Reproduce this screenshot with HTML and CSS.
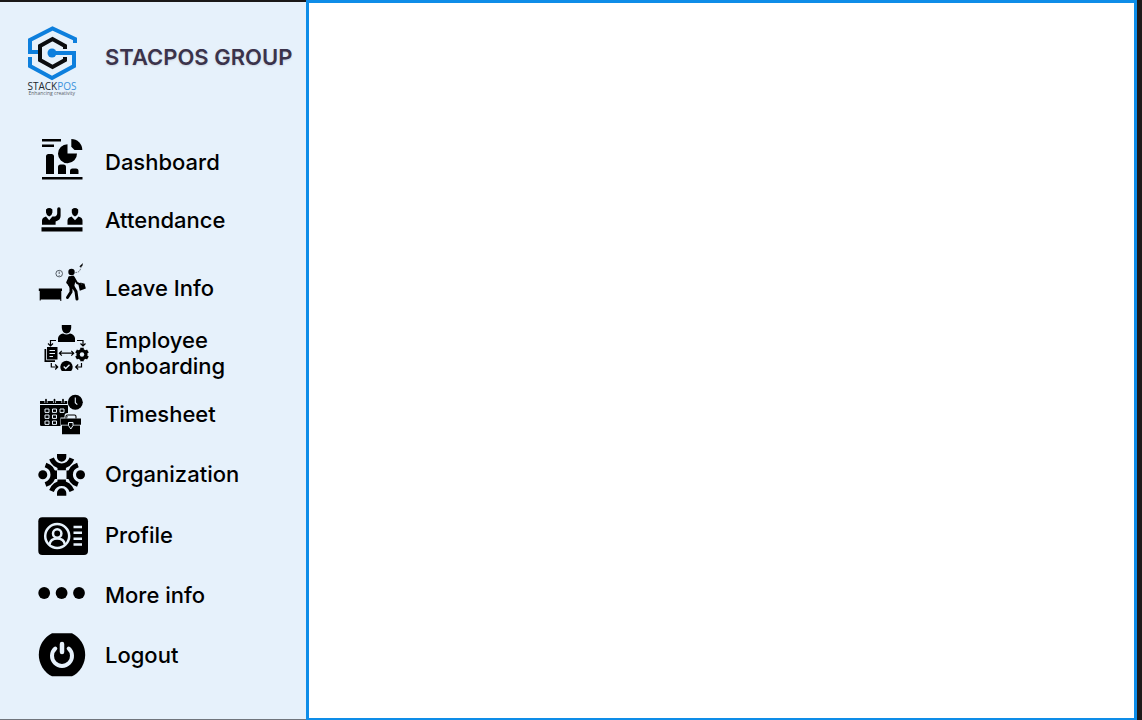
FILE: index.html
```html
<!DOCTYPE html>
<html lang="en">
<head>
<meta charset="utf-8">
<meta name="viewport" content="width=device-width, initial-scale=1">
<title>Stacpos Group</title>
<link rel="stylesheet" href="styles.css">
</head>
<body>
<div class="app">
  <aside class="sidebar">
    <header class="brand">
      <svg class="brand-logo" viewBox="24 24 56 74" role="img" aria-label="StackPOS">
        <g fill="none" stroke-width="4">
          <path stroke="#0d7fdd" d="M75 43V39L52.500 28.500L30 40V52H38M51 53H74V66L52 78L30 66V57"/>
          <path stroke="#0b0d10" d="M65 49V46L52.500 39L40 46V60L52.500 67L65 60V57"/>
        </g>
        <circle cx="52" cy="53" r="4.500" fill="#0d7fdd"/>
        <text class="logo-name" x="27.500" y="90"><tspan>STACK</tspan><tspan class="logo-accent">POS</tspan></text>
        <text class="logo-tagline" x="28.500" y="95">Enhancing creativity</text>
      </svg>
      <h1 class="brand-title">STACPOS GROUP</h1>
    </header>
    <nav class="menu" aria-label="Main">
      <a class="item" href="#dashboard">
        <svg class="icon" viewBox="36 134 56 56" aria-hidden="true">
          <path d="M42 139h19v2.600H42zM42 144.500h12v2.500H42zM42 177h40.500v2.500H42z"/>
          <path d="M46 174v-17.500q0-2.500 2.500-2.500h3q2.500 0 2.500 2.500V174zM58 174v-7q0-2.500 2.500-2.500h3q2.500 0 2.500 2.500v7zM70 174v-3q0-2.500 2.500-2.500h3.500q2.500 0 2.500 2.500v3z"/>
          <path d="M67.500 144.200V153.500H77A9.500 9.500 0 1 1 67.500 144.200z"/>
          <path d="M71.300 139A11 11 0 0 1 82.300 150H74.500L71.300 146.800z"/>
        </svg>
        <span>Dashboard</span>
      </a>
      <a class="item gap-small" href="#attendance">
        <svg class="icon" viewBox="36 192 56 56" aria-hidden="true">
          <path d="M41.500 227.200h41v4.300h-41z"/>
          <path d="M46 209.500q3.200-2.800 6.400 0v3q-.4 3-3.200 4-2.800-1-3.200-4zM71.800 209.500q3.200-2.800 6.400 0v3q-.4 3-3.200 4-2.800-1-3.200-4z"/>
          <path d="M42 224.800V220.500q0-2.800 4-4l3.200 3.800 3.200-3.800q4.500.7 4.800-3V209q0-1.800 1.700-1.800T60.600 209v7q0 4-5 5.500v3.300z"/>
          <path d="M67.500 224.800V220.500q0-2.800 4-4l3.500 3.800 3.500-3.800q4 1.200 4 4v4.300z"/>
        </svg>
        <span>Attendance</span>
      </a>
      <a class="item gap-large" href="#leave">
        <svg class="icon" viewBox="36 260 56 56" aria-hidden="true">
          <path d="M38.800 288.500H62V291H38.800zM40.200 290H60.800V299.500H40.200zM39.700 290h1v10.500h-1zM60.300 290h1v11h-1z"/>
          <g fill="none" stroke="#333b42" stroke-width="0.800">
            <circle cx="59.200" cy="273.600" r="3.300"/>
            <path d="M59.200 271.500v2.500M59.200 275v.8"/>
            <path stroke-dasharray="1.500 1" d="M75.500 272.500q5 0 5.500-6"/>
          </g>
          <path d="M79.300 266.500l3.700-3.500-.7 3-1.500 1z"/>
          <circle cx="71.500" cy="272" r="3.200"/>
          <path d="M68.500 276.500L73.500 275.500L75.500 281L73.800 288L70.500 289L68 285z"/>
          <g fill="none" stroke="#000" stroke-linecap="round" stroke-linejoin="round">
            <path stroke-width="2" d="M69.500 277.500L67.200 282.500 70 285.500M73.500 277L77 283 80.500 284.500"/>
            <path stroke-width="3" d="M71 287L71 292 67.500 297.500M73 286.500L76 291.500 77 299"/>
            <path stroke-width="1" d="M79.500 285.500l1-2.500 3 1"/>
          </g>
          <path d="M78.500 285l6-1.500 1.300 5-6 2.300z"/>
        </svg>
        <span>Leave Info</span>
      </a>
      <a class="item gap-medium" href="#onboarding">
        <svg class="icon" viewBox="36 325 56 56" aria-hidden="true">
          <path d="M61.800 325h9.400v3q-.5 5-4.700 5.500-4.200-.5-4.700-5.500zM58 342V338q1-4 5-4.500 3.500 1.800 7 0 4 .5 5 4.500v4z"/>
          <path d="M47 347H57.500V359.500H47zM44.500 349h1.700v11.200H55V362H44.500z"/>
          <path stroke="#e6f1fb" stroke-width="1" d="M49.500 350.500h5.500M49.500 353.500h5.500M49.500 356.500h3.500"/>
          <g fill="none" stroke="#000" stroke-width="1.200">
            <path d="M56 340.500H50.500V346M48 343.500l2.500 2.500 2.500-2.500M77 340.500H83V346M80.500 343.500l2.500 2.500 2.500-2.500M59.500 353.200H73.500M61.800 350.800l-2.400 2.400 2.400 2.400M71.300 350.800l2.400 2.400-2.400 2.400M51.300 363V367H57.500M55.200 364.500l2.500 2.500-2.500 2.500M81.500 363V367H76M78.200 364.500l-2.500 2.500 2.500 2.500"/>
          </g>
          <circle cx="82" cy="354.500" r="5.500"/>
          <path fill="none" stroke="#000" stroke-width="3.500" d="M82 347.700V361.300M76.100 351.100L87.900 357.900M76.100 357.900L87.900 351.100"/>
          <circle cx="82" cy="354.500" r="2.200" fill="#e6f1fb"/>
          <path d="M61.800 371A6.200 6.200 0 1 1 71.200 371z"/>
          <path fill="none" stroke="#e6f1fb" stroke-width="1.300" d="M63.700 366.500l2 2 3.800-3.700"/>
        </svg>
        <span>Employee onboarding</span>
      </a>
      <a class="item gap-roomy" href="#timesheet">
        <svg class="icon" viewBox="36 386 56 56" aria-hidden="true">
          <path d="M40 401h28.500v3H40zM40 405H68V426H41.500q-1.500 0-1.500-1.500z"/>
          <path fill="none" stroke="#e6f1fb" stroke-width="3" d="M46 399v4M54.500 399v4M63 399v4"/>
          <path fill="none" stroke="#000" stroke-width="1.700" stroke-linecap="round" d="M46 399.500v3M54.500 399.500v3M63 399.500v3"/>
          <path fill="none" stroke="#e6f1fb" stroke-width="1" d="M45 409h4v3.400h-4zM52.500 409h4v3.400h-4zM60 409h4v3.400h-4zM45 415h4v3.400h-4zM52.500 415h4v3.400h-4zM45 421h4v3.400h-4zM52.500 421h4v3.400h-4z"/>
          <circle cx="75.300" cy="402.300" r="8.300" fill="#e6f1fb"/>
          <circle cx="75.300" cy="402.300" r="7.500"/>
          <path fill="none" stroke="#e6f1fb" stroke-width="1.100" d="M75.300 397.500v5.200l2 2"/>
          <path fill="#e6f1fb" d="M60.500 417.500H82V434.500H60.500z"/>
          <path fill="none" stroke="#e6f1fb" stroke-width="3" d="M66 418v-2q0-1.500 1.500-1.500h7q1.500 0 1.500 1.500v2"/>
          <path fill="none" stroke="#000" stroke-width="1.100" d="M66 418.500v-2q0-1.500 1.500-1.500h7q1.500 0 1.500 1.500v2"/>
          <path d="M61 418.500H81V424.800H61zM62 425.500H80V434.200H62z"/>
          <path stroke="#e6f1fb" stroke-width="1" d="M68.500 422.500h4.500v3l-2.200 3.500-2.300-3.500z"/>
        </svg>
        <span>Timesheet</span>
      </a>
      <a class="item" href="#organization">
        <svg class="icon" viewBox="36 446 56 56" aria-hidden="true">
          <circle cx="42.800" cy="474.700" r="4.500"/><circle cx="80.500" cy="474.700" r="4.500"/>
          <path d="M57 454h9.300v3a4.650 4.650 0 0 1-9.300 0zM57 495.700h9.300V493a4.650 4.650 0 0 0-9.300 0z"/>
          <path fill="none" stroke="#000" stroke-width="5" d="M51.500 458.500Q54.500 466 61.700 466T71.900 458.500M51.500 491Q54.500 483.500 61.700 483.500T71.900 491M45.500 465Q53 467.500 53 474.700T45.500 484.500M77.900 465Q70.400 467.500 70.400 474.700T77.900 484.500"/>
          <path d="M57.500 465h8.400v5.200h-8.400zM57.500 479.500h8.400v5h-8.400zM52 470.500h5v8.500h-5zM66.500 470.500h5v8.500h-5z"/>
        </svg>
        <span>Organization</span>
      </a>
      <a class="item gap-roomy" href="#profile">
        <svg class="icon" viewBox="36 507 56 56" aria-hidden="true">
          <rect x="38.300" y="517.200" width="49.700" height="37.800" rx="4"/>
          <g fill="none" stroke="#e6f1fb" stroke-width="2.500">
            <circle cx="57.200" cy="536" r="12"/>
            <circle cx="57.200" cy="533.500" r="4.200"/>
            <path d="M49.500 544.500q1-6 7.700-6t7.700 6"/>
            <path d="M73.500 527h8.500M73.500 532.800h8.500M73.500 538.700h8.500M73.500 544.500h8.500"/>
          </g>
        </svg>
        <span>Profile</span>
      </a>
      <a class="item" href="#more">
        <svg class="icon" viewBox="36 567 56 56" aria-hidden="true">
          <circle cx="44.200" cy="593" r="5.900"/><circle cx="61.600" cy="593" r="5.900"/><circle cx="79" cy="593" r="5.900"/>
        </svg>
        <span>More info</span>
      </a>
      <a class="item" href="#logout">
        <svg class="icon" viewBox="36 627 56 56" aria-hidden="true">
          <path d="M52 633.200H72A24.200 24.200 0 0 1 72 676.300H52A24.200 24.200 0 0 1 52 633.200z"/>
          <path fill="none" stroke="#e6f1fb" stroke-width="4" stroke-linecap="round" d="M55.300 648.500A10 10 0 1 0 68.700 648.500"/>
          <path fill="none" stroke="#e6f1fb" stroke-width="4.500" stroke-linecap="round" d="M62 644v8"/>
        </svg>
        <span>Logout</span>
      </a>
    </nav>
  </aside>
  <main class="content"></main>
</div>
</body>
</html>
```
FILE: styles.css
```css
* { box-sizing: border-box; }

body {
  margin: 0;
  background: #1e1a1a;
  color: #000;
  font-family: Inter, "Liberation Sans", sans-serif;
}

.app {
  display: flex;
  min-height: 100vh;
  padding-right: 5px;
}

.sidebar {
  flex: 0 0 306px;
  border-top: 2px solid #1b1818;
  border-bottom: 1px solid #70757c;
  background: #e6f1fb;
}

.brand {
  display: flex;
  gap: 25px;
  height: 132px;
  padding: 22px 0 0 24px;
}

.brand-logo {
  flex: none;
  width: 56px;
  height: 74px;
}

.logo-name {
  fill: #23282e;
  font: 10px "Open Sans", sans-serif;
}

.logo-accent { fill: #3c91dc; }

.logo-tagline {
  fill: #59616a;
  font: 5px "Open Sans", sans-serif;
}

.brand-title {
  margin: 17px 0 0;
  color: #3b334b;
  font-size: 22px;
  font-weight: 600;
  line-height: 32px;
  white-space: nowrap;
  text-shadow: 0 1px 2px #c9d0dc;
}

.menu {
  display: flex;
  flex-direction: column;
}

.item {
  display: flex;
  align-items: center;
  gap: 13px;
  min-height: 56px;
  margin-top: 4px;
  padding: 0 40px 0 36px;
  color: #000;
  font-size: 22px;
  font-weight: 450;
  line-height: 26px;
  text-decoration: none;
}

.item:first-child { margin-top: 0; }
.item.gap-small { margin-top: 2px; }
.item.gap-roomy { margin-top: 5px; }
.item.gap-medium { margin-top: 9px; }
.item.gap-large { margin-top: 12px; }

.icon {
  flex: none;
  width: 56px;
  height: 56px;
  overflow: visible;
}

.content {
  flex: 1;
  border: 3px solid #0e8de8;
  border-bottom-width: 2px;
  background: #fff;
}
```
